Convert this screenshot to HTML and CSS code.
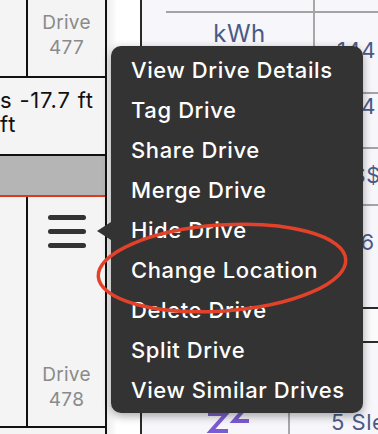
FILE: index.html
```html
<!DOCTYPE html>
<html>
<head>
<meta charset="utf-8">
<link rel="stylesheet" href="styles.css">
</head>
<body>
<div class="stage">
  <div class="left">
    <div class="lrow r1">
      <div class="ca"></div>
      <div class="cb"><div class="drive">Drive<br>477</div></div>
    </div>
    <div class="lrow r2"><div class="dist">s -17.7 ft<br>ft</div></div>
    <div class="lrow r3"></div>
    <div class="lrow r4">
      <div class="ca"></div>
      <div class="cb col">
        <div class="burger"><span></span><span></span><span></span></div>
        <div class="drive">Drive<br>478</div>
      </div>
    </div>
  </div>
  <div class="gap"></div>
  <div class="right">
    <div class="tbl">
      <div class="trow t0"><div class="c1"></div><div class="c2"></div></div>
      <div class="trow tb"><div class="c1 unit">kWh</div><div class="c2 val">144</div></div>
      <div class="trow tc"><div class="c1"></div><div class="c2 val">144</div></div>
      <div class="trow td"><div class="c1"></div><div class="c2 val">$$$</div></div>
      <div class="trow te"><div class="c1"></div><div class="c2 val">166</div></div>
    </div>
    <div class="band"></div>
    <div class="lower">
      <div class="l1">
        <svg class="zz" width="50" height="36" viewBox="0 0 50 36">
          <path d="M2 5 H20 L5 22 H22" fill="none" stroke="#7b5bd2" stroke-width="4" stroke-linejoin="miter"/>
          <path d="M27 -4 H42 L28 12 H43" fill="none" stroke="#7b5bd2" stroke-width="4"/>
        </svg>
      </div>
      <div class="l2 val">5 Sleep</div>
    </div>
  </div>

  <ul class="menu">
    <li>View Drive Details</li>
    <li>Tag Drive</li>
    <li>Share Drive</li>
    <li>Merge Drive</li>
    <li>Hide Drive</li>
    <li>Change Location</li>
    <li>Delete Drive</li>
    <li>Split Drive</li>
    <li>View Similar Drives</li>
  </ul>

  <svg class="annot" width="378" height="434" viewBox="0 0 378 434">
    <ellipse cx="222" cy="268" rx="124" ry="43" transform="rotate(-4 222 268)" fill="none" stroke="#e2412a" stroke-width="3.5"/>
  </svg>
</div>
</body>
</html>
```

FILE: styles.css
```css
* { box-sizing: border-box; }
html, body { margin: 0; padding: 0; background: #fff; }
body { font-family: Inter, "Noto Sans", sans-serif; overflow: hidden; }

.stage {
  position: relative;
  width: 378px;
  height: 434px;
  display: flex;
  overflow: hidden;
}

/* left table */
.left {
  width: 107px;
  flex: none;
  background: #f4f4f4;
  border-right: 2px solid #111;
  display: flex;
  flex-direction: column;
}
.lrow { display: flex; border-bottom: 2px solid #111; }
.r1 { height: 78px; }
.r2 { height: 78px; }
.r3 { height: 41px; background: #b5b5b5; border-bottom: 2px solid #e0381f; }
.r4 { height: 231px; }
.ca { width: 28px; border-right: 2px solid #111; flex: none; }
.cb { flex: 1; text-align: center; }
.col { display: flex; flex-direction: column; align-items: center; justify-content: space-between; }
.drive {
  color: #8a8a8a;
  font-size: 19px;
  line-height: 25px;
  letter-spacing: 0.3px;
  padding-top: 10px;
}
.r4 .drive { padding-top: 0; padding-bottom: 14px; }
.dist {
  font-size: 22px;
  line-height: 24px;
  letter-spacing: 0.8px;
  color: #111;
  padding-top: 10px;
  white-space: nowrap;
}
.burger {
  margin-top: 18px;
  display: flex;
  flex-direction: column;
  gap: 9px;
}
.burger span {
  display: block;
  width: 38px;
  height: 5px;
  border-radius: 3px;
  background: #333;
}

/* gap with shadow */
.gap {
  width: 33px;
  flex: none;
  background: linear-gradient(to right, #ececec, #fff 10px);
}

/* right table */
.right {
  flex: 1;
  min-width: 0;
  background: #f6f6fb;
  border-left: 2px solid #2a2a2a;
  display: flex;
  flex-direction: column;
}
.tbl { margin-left: 24px; }
.trow { display: flex; border-bottom: 2px solid #a3a3a3; }
.c1 { width: 149px; border-right: 2px solid #a8a8a8; flex: none; text-align: center; }
.c2 { flex: 1; padding-left: 22px; white-space: nowrap; overflow: hidden; }
.t0 { height: 13px; }
.tb { height: 81px; }
.tc { height: 55px; }
.td { height: 57px; }
.te { height: 103px; border-bottom: 2px solid #2b2b2b; }
.unit, .val { color: #4b5a85; font-size: 22px; line-height: 24px; letter-spacing: 0.5px; }
.unit { font-size: 24px; padding-top: 9px; }
.tb .val { padding-top: 25px; }
.tc .val { padding-top: 0px; }
.td .val { padding-top: 14px; }
.te .val { padding-top: 24px; }
.band { height: 35px; background: #fbfbfb; border-bottom: 2px solid #2b2b2b; }
.lower { flex: 1; display: flex; min-width: 0; }
.l1 { width: 148px; border-right: 2px solid #a8a8a8; flex: none; display: flex; align-items: flex-end; }
.zz { margin-left: 64px; margin-bottom: -11px; }
.l2 { flex: 1; min-width: 0; padding-left: 41px; padding-top: 67px; white-space: nowrap; overflow: hidden; }

/* context menu (overlay) */
.menu {
  position: absolute;
  left: 111px;
  top: 46px;
  width: 252px;
  height: 367px;
  margin: 0;
  padding: 4px 0 0 20px;
  list-style: none;
  background: #333;
  border-radius: 10px;
  box-shadow: 0 3px 10px rgba(0,0,0,0.35);
}
.menu::before {
  content: "";
  position: absolute;
  left: -14px;
  top: 176px;
  border-top: 9px solid transparent;
  border-bottom: 9px solid transparent;
  border-right: 14px solid #333;
}
.menu li {
  color: #fff;
  font-size: 22px;
  font-weight: 500;
  line-height: 40px;
  height: 40px;
  white-space: nowrap;
  letter-spacing: 0.6px;
}

.annot {
  position: absolute;
  left: 0;
  top: 0;
  pointer-events: none;
}
```
